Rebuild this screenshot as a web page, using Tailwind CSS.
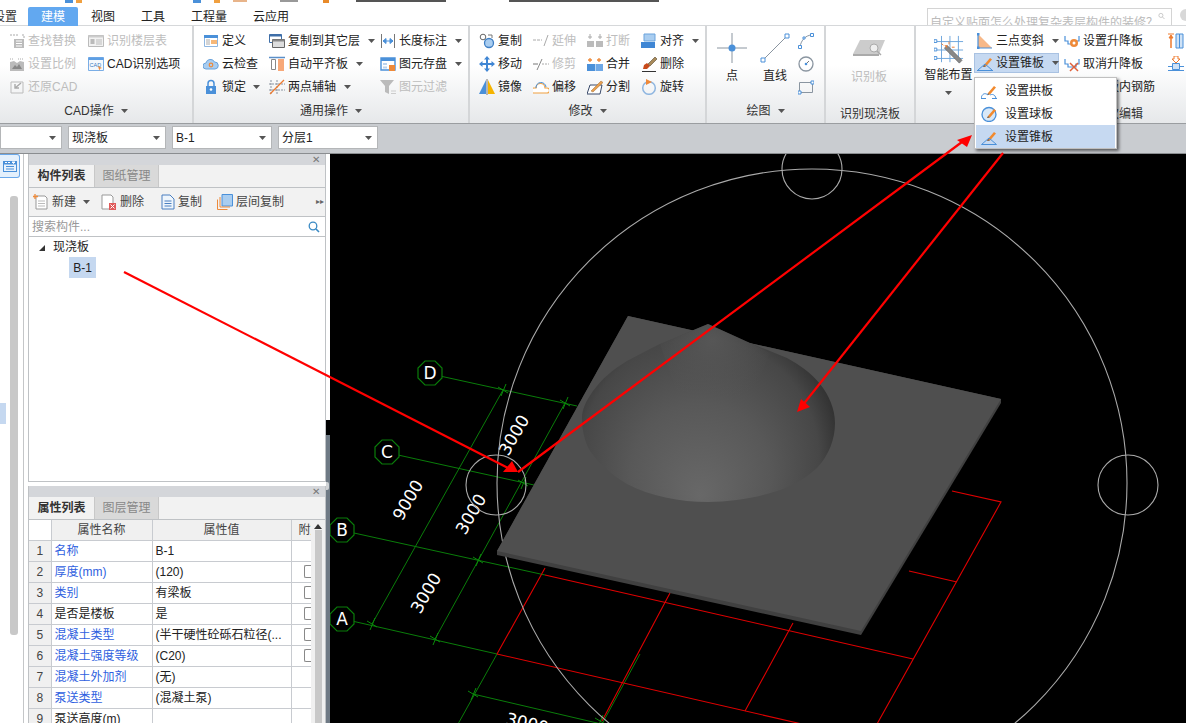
<!DOCTYPE html>
<html lang="zh">
<head>
  <meta charset="UTF-8">
  <title>建模 - 设置锥板</title>
  <script src="https://cdn.jsdelivr.net/npm/@tailwindcss/browser@4"></script>
</head>
<body class="relative w-[1186px] h-[723px] overflow-hidden bg-white text-[12px] leading-none text-[#222] font-['Liberation_Sans','Noto_Sans_CJK_SC',sans-serif]">
  <svg class="hidden">
    <symbol id="caret" viewBox="0 0 7 4"><path d="M0 0h7L3.500 4z" fill="#555"/></symbol>
    <symbol id="pen" viewBox="0 0 16 16"><path d="M7 10L13 3l2 1.500-6 7z" fill="#f28a2e"/><path d="M7 10l-1 2 3-.5z" fill="#7a4a20"/></symbol>
    <g id="bub"><polygon points="-5,-12 5,-12 12,-5 12,5 5,12 -5,12 -12,5 -12,-5" fill="#000" stroke="#0a7d0a" stroke-width="1.200"/></g>
    <path id="tick" d="M-5-3L5 3M-2 6L3-6" stroke="#0a8a0a" fill="none"/>
  </svg>

  <!-- 标题栏和页签 -->
  <div class="relative h-[26px] border-b border-[#d6d8da] bg-white">
    <div class="flex h-[4px] overflow-hidden pl-[65px] gap-[3px]">
      <div class="w-[8px] h-[3px] bg-[#4a90d9]"></div>
      <div class="w-[6px] h-[3px] bg-[#f0a040]"></div>
      <div class="ml-[108px] w-[8px] h-[3px] bg-[#4a90d9]"></div>
      <div class="ml-[10px] w-[6px] h-[3px] bg-[#f0a040]"></div>
      <div class="ml-[10px] w-[14px] h-[2px] bg-[#e8b48a]"></div>
      <div class="ml-[30px] w-[18px] h-[2px] bg-[#999]"></div>
      <div class="ml-[22px] w-[6px] h-[3px] bg-[#e88a2a]"></div>
      <div class="ml-[24px] w-[90px] h-[2px] bg-[#555]"></div>
      <div class="ml-[60px] w-[150px] h-[2px] bg-[#555]"></div>
    </div>
    <div class="flex h-[19px] mt-[3px] items-center">
      <span class="w-[28px] pl-0 text-[#333] -ml-[7px]">设置</span>
      <span class="ml-[7px] flex w-[50px] h-[19px] items-center justify-center rounded-t-[2px] bg-[#62a8f0] text-white">建模</span>
      <span class="ml-[13px]">视图</span>
      <span class="ml-[26px]">工具</span>
      <span class="ml-[26px]">工程量</span>
      <span class="ml-[26px]">云应用</span>
    </div>
    <div class="absolute left-[927px] top-[8px] flex h-[17px] w-[245px] overflow-hidden border border-b-0 border-[#d4d4d4] pl-[2px] pr-[6px]">
      <span class="flex-1 pt-[8px] text-[#bbb] whitespace-nowrap">自定义贴面怎么处理复杂表层构件的装修？</span>
      <svg class="w-[12px] h-[12px] mt-[1px]" viewBox="0 0 12 12"><circle cx="5" cy="5" r="3.500" fill="none" stroke="#bbb" stroke-width="1.300"/><path d="M8 8l3 3" stroke="#bbb" stroke-width="1.500"/></svg>
    </div>
    <div class="absolute left-[1180px] top-[9px] h-[12px] w-[12px] rounded-full bg-[#d8d8d8]"></div>
  </div>

  <!-- 功能区 -->
  <div class="flex h-[98px] bg-gradient-to-b from-white from-40% to-[#e6e8ea] border-b border-[#9a9da0]">

    <!-- CAD操作 -->
    <div class="flex w-[194px] flex-col border-r-2 border-[#d4d6d8] pt-[3px]">
      <div class="flex h-[70px] pl-[9px]">
        <div class="w-[79px] text-[#bdbdbd]">
          <div class="flex h-[23px] items-center gap-[3px]"><svg class="w-[16px] h-[16px]" viewBox="0 0 16 16"><path d="M1 2h9M13 2h2v3" stroke="#aaa" stroke-dasharray="2 1" fill="none"/><path d="M5 6h10v9H5z" fill="#bbb"/><path d="M7 8h6M7 10.500h6M7 13h6" stroke="#fff"/></svg>查找替换</div>
          <div class="flex h-[23px] items-center gap-[3px]"><svg class="w-[16px] h-[16px]" viewBox="0 0 16 16"><path d="M1 3h4M9 3h5" stroke="#aaa" stroke-dasharray="1 1"/><path d="M1 6l4-1 3 2 3-2 4 1v9H1z" fill="#bbb"/><path d="M3 13l3-4 2 2 2-3 3 5z" fill="#888"/></svg>设置比例</div>
          <div class="flex h-[23px] items-center gap-[3px]"><svg class="w-[16px] h-[16px]" viewBox="0 0 16 16"><path d="M2 3h12v11H2z" fill="none" stroke="#bbb"/><path d="M12 4L6 9m0-4v4h4" fill="none" stroke="#aaa" stroke-width="1.400"/></svg>还原CAD</div>
        </div>
        <div>
          <div class="flex h-[23px] items-center gap-[3px] text-[#bdbdbd]"><svg class="w-[16px] h-[16px]" viewBox="0 0 16 16"><path d="M0.500 2.500h15v11h-15z" fill="#f2f2f2" stroke="#bbb"/><path d="M0.500 2.500h15v2h-15z" fill="#ccc"/><path d="M2.500 6h4v5h-4z" fill="#bbb"/><path d="M8 7h6M8 9h6M8 11h6" stroke="#bbb"/></svg>识别楼层表</div>
          <div class="flex h-[23px] items-center gap-[3px]"><svg class="w-[16px] h-[16px]" viewBox="0 0 16 16"><path d="M0.500 1.500h15v13h-15z" fill="#f4f8fd" stroke="#7aaee6"/><path d="M0.500 1.500h15v2.500h-15z" fill="#5e9fe4"/><text x="1.500" y="11" font-size="5.500" fill="#3a78c0">CAD</text><path d="M10 10l4 2-2 .7-.7 2z" fill="#ee8a3a"/></svg>CAD识别选项</div>
        </div>
      </div>
      <div class="flex flex-1 items-center justify-center gap-[7px] text-[#333] pb-[1px]">CAD操作<svg class="w-[7px] h-[4px]"><use href="#caret"/></svg></div>
    </div>

    <!-- 通用操作 -->
    <div class="flex w-[276px] flex-col border-r-2 border-[#d4d6d8] pt-[3px]">
      <div class="flex h-[70px] pl-[9px]">
        <div class="w-[66px]">
          <div class="flex h-[23px] items-center gap-[3px]"><svg class="w-[16px] h-[16px]" viewBox="0 0 16 16"><path d="M1.500 2.500h13v11h-13z" fill="#fff" stroke="#8fb6e0"/><path d="M1 2h14v3H1z" fill="#4a90d9"/><path d="M8 7h6v4H8z" fill="#f7b878"/><path d="M3 7h4M3 9h4M3 11h4" stroke="#aaa"/></svg>定义</div>
          <div class="flex h-[23px] items-center gap-[3px]"><svg class="w-[16px] h-[16px]" viewBox="0 0 16 16"><path d="M3 13a3 3 0 010-6 4.500 4.500 0 018.500-1A3.500 3.500 0 0112 13z" fill="#a9cdf0" stroke="#6aa3dc"/><circle cx="8" cy="9" r="1.800" fill="none" stroke="#ee8a3a" stroke-width="1.200"/></svg>云检查</div>
          <div class="flex h-[23px] items-center gap-[3px]"><svg class="w-[16px] h-[16px]" viewBox="0 0 16 16"><path d="M5 7V4.500a3 3 0 016 0V7" fill="none" stroke="#4a90d9" stroke-width="1.500"/><path d="M3 7h10v8H3z" fill="#4a90d9"/><circle cx="8" cy="10.500" r="1.300" fill="#fff"/></svg>锁定<svg class="ml-[4px] w-[7px] h-[4px]"><use href="#caret"/></svg></div>
        </div>
        <div class="w-[111px]">
          <div class="flex h-[23px] items-center gap-[3px]"><svg class="w-[16px] h-[16px]" viewBox="0 0 16 16"><path d="M0.500 1.500h12v8h-12z" fill="#fff" stroke="#3f6fa8"/><path d="M0.500 1.500h12v2h-12z" fill="#3f6fa8"/><path d="M3.500 6.500h12v8h-12z" fill="#ddd" stroke="#666"/><path d="M3.500 6.500h12v2h-12z" fill="#888"/></svg>复制到其它层<svg class="ml-[5px] w-[7px] h-[4px]"><use href="#caret"/></svg></div>
          <div class="flex h-[23px] items-center gap-[3px]"><svg class="w-[16px] h-[16px]" viewBox="0 0 16 16"><path d="M0 1.500h16" stroke="#5b8fc8" stroke-width="1.500"/><path d="M2.500 3.500h4v10h-4z" fill="#fff" stroke="#888"/><path d="M9 3h6v12H9z" fill="#f7a878"/></svg>自动平齐板<svg class="ml-[5px] w-[7px] h-[4px]"><use href="#caret"/></svg></div>
          <div class="flex h-[23px] items-center gap-[3px]"><svg class="w-[16px] h-[16px]" viewBox="0 0 16 16"><path d="M2 1v14M8 1v14M0 5h16M0 11h16" stroke="#8a93a0" stroke-dasharray="2 1"/><path d="M1 15L15 1" stroke="#ee7a2e" stroke-width="1.200"/></svg>两点辅轴<svg class="ml-[5px] w-[7px] h-[4px]"><use href="#caret"/></svg></div>
        </div>
        <div class="w-[88px]">
          <div class="flex h-[23px] items-center gap-[3px]"><svg class="w-[16px] h-[16px]" viewBox="0 0 16 16"><path d="M1.500 1v14M14.500 1v14" stroke="#777"/><path d="M3 8h10M3 8l3-2.500v5zM13 8l-3-2.500v5z" stroke="#4a90d9" fill="#4a90d9"/></svg>长度标注<svg class="ml-[5px] w-[7px] h-[4px]"><use href="#caret"/></svg></div>
          <div class="flex h-[23px] items-center gap-[3px]"><svg class="w-[16px] h-[16px]" viewBox="0 0 16 16"><path d="M1 2h14v12H1z" fill="#fff" stroke="#4a90d9" stroke-width="1.400"/><path d="M1 2h14v3H1z" fill="#4a90d9"/><path d="M3 7h4v2H3zM3 10.500h4v2H3z" fill="#bcd4ee"/><path d="M9 9h6v6H9z" fill="#ee8a3a"/></svg>图元存盘<svg class="ml-[5px] w-[7px] h-[4px]"><use href="#caret"/></svg></div>
          <div class="flex h-[23px] items-center gap-[3px] text-[#bdbdbd]"><svg class="w-[16px] h-[16px]" viewBox="0 0 16 16"><path d="M0 1h14L9 7v8L5 13V7z" fill="#bbb"/><path d="M11 12h5M11 14.500h5" stroke="#ccc"/></svg>图元过滤</div>
        </div>
      </div>
      <div class="flex flex-1 items-center justify-center gap-[7px] text-[#333] pb-[1px]">通用操作<svg class="w-[7px] h-[4px]"><use href="#caret"/></svg></div>
    </div>

    <!-- 修改 -->
    <div class="flex w-[237px] flex-col border-r-2 border-[#d4d6d8] pt-[3px]">
      <div class="flex h-[70px] pl-[9px]">
        <div class="w-[54px]">
          <div class="flex h-[23px] items-center gap-[3px]"><svg class="w-[16px] h-[16px]" viewBox="0 0 16 16"><circle cx="4" cy="4" r="2.800" fill="#fff" stroke="#666"/><circle cx="10" cy="10" r="4.500" fill="#a9cdf0" stroke="#3f7fc4" stroke-width="1.300"/><path d="M9 2h4M13 2v3" stroke="#777" fill="none"/></svg>复制</div>
          <div class="flex h-[23px] items-center gap-[3px]"><svg class="w-[16px] h-[16px]" viewBox="0 0 16 16"><path d="M8 0l3 3.500H9v3.500h3.500V5L16 8l-3.500 3V9H9v3.500h2L8 16l-3-3.500h2V9H3.500v2L0 8l3.500-3v2H7V3.500H5z" fill="#3f86d4"/></svg>移动</div>
          <div class="flex h-[23px] items-center gap-[3px]"><svg class="w-[16px] h-[16px]" viewBox="0 0 16 16"><path d="M7 1v14H0z" fill="#4a90d9"/><path d="M9 1v14h7z" fill="#f5b400"/><path d="M8 0v16" stroke="#777"/></svg>镜像</div>
        </div>
        <div class="w-[54px] text-[#bdbdbd]">
          <div class="flex h-[23px] items-center gap-[3px]"><svg class="w-[16px] h-[16px]" viewBox="0 0 16 16"><path d="M0 7h9" stroke="#aaa" stroke-dasharray="3 1"/><path d="M11 13l4-11" stroke="#aaa"/></svg>延伸</div>
          <div class="flex h-[23px] items-center gap-[3px]"><svg class="w-[16px] h-[16px]" viewBox="0 0 16 16"><path d="M0 8h5" stroke="#777"/><path d="M4 14L9 3" stroke="#888"/><path d="M9 8h7" stroke="#aaa" stroke-dasharray="2 1"/></svg>修剪</div>
          <div class="flex h-[23px] items-center gap-[3px] text-[#222]"><svg class="w-[16px] h-[16px]" viewBox="0 0 16 16"><path d="M1 14a2.500 2.500 0 010-5h2a4.500 4.500 0 019 0h2a2.500 2.500 0 010 5z" fill="#fff" stroke="#f0a040" stroke-width="1.200"/><path d="M3 9a5 5 0 0110-1" fill="none" stroke="#4a90d9"/></svg>偏移</div>
        </div>
        <div class="w-[54px] text-[#bdbdbd]">
          <div class="flex h-[23px] items-center gap-[3px]"><svg class="w-[16px] h-[16px]" viewBox="0 0 16 16"><path d="M0 8h7v6H0zM9 8h7v6H9z" fill="#bbb"/><path d="M3 1v5M13 1v5M1 4h4M11 4h4" stroke="#aaa"/></svg>打断</div>
          <div class="flex h-[23px] items-center gap-[3px] text-[#222]"><svg class="w-[16px] h-[16px]" viewBox="0 0 16 16"><path d="M0 8h8v7H0z" fill="#4a90d9"/><path d="M8.500 8H16v7H8.500z" fill="#6ea8e6"/><path d="M3 2v4M1 4h4M12 2v4M10 4h4" stroke="#ee8a3a" stroke-width="1.300"/></svg>合并</div>
          <div class="flex h-[23px] items-center gap-[3px] text-[#222]"><svg class="w-[16px] h-[16px]" viewBox="0 0 16 16"><path d="M3 6h12l-2 9H0z" fill="#fff" stroke="#3a4a6a"/><path d="M4 12L14 2l2 1.500L6 13z" fill="#e8a050" stroke="#a06a30" stroke-width=".5"/></svg>分割</div>
        </div>
        <div>
          <div class="flex h-[23px] items-center gap-[3px]"><svg class="w-[16px] h-[16px]" viewBox="0 0 16 16"><path d="M3 1h11v7H3z" fill="#a9cdf0" stroke="#6aa3dc"/><path d="M0 9h14v6H0z" fill="#3f86d4"/></svg>对齐<svg class="ml-[5px] w-[7px] h-[4px]"><use href="#caret"/></svg></div>
          <div class="flex h-[23px] items-center gap-[3px]"><svg class="w-[16px] h-[16px]" viewBox="0 0 16 16"><path d="M7 8l7-7 2 2-7 7z" fill="#a88a5a" stroke="#5a4a30" stroke-width=".6"/><path d="M3 9l3-2 3 3-3 3-4 0z" fill="#c84a1a"/><path d="M1 15.500h14" stroke="#333"/></svg>删除</div>
          <div class="flex h-[23px] items-center gap-[3px]"><svg class="w-[16px] h-[16px]" viewBox="0 0 16 16"><circle cx="8" cy="9" r="6.300" fill="none" stroke="#8fb6e0" stroke-width="1.500"/><path d="M5 0l6 3-6 3z" fill="#ee8a3a"/></svg>旋转</div>
        </div>
      </div>
      <div class="flex flex-1 items-center justify-center gap-[7px] text-[#333] pb-[1px]">修改<svg class="w-[7px] h-[4px]"><use href="#caret"/></svg></div>
    </div>

    <!-- 绘图 -->
    <div class="flex w-[119px] flex-col border-r-2 border-[#d4d6d8] pt-[7px]">
      <div class="flex h-[66px] pl-[10px]">
        <div class="flex w-[30px] flex-col items-center gap-[7px]">
          <svg class="w-[30px] h-[30px]" viewBox="0 0 30 30"><path d="M15 0v30M0 15h30" stroke="#8a95a0"/><circle cx="15" cy="15" r="3.500" fill="#4a90d9"/></svg>
          <span>点</span>
        </div>
        <div class="ml-[14px] flex w-[28px] flex-col items-center gap-[7px]">
          <svg class="w-[30px] h-[30px]" viewBox="0 0 30 30"><path d="M3 27L27 3" stroke="#8a95a0"/><path d="M1 25h4v4H1zM25 1h4v4h-4z" fill="#fff" stroke="#4a90d9"/></svg>
          <span>直线</span>
        </div>
        <div class="ml-[9px] flex flex-col gap-[7px]">
          <svg class="w-[16px] h-[16px]" viewBox="0 0 16 16"><path d="M2 14C3 7 8 2 14 2" fill="none" stroke="#8a95a0"/><path d="M0.500 12.500h3v3h-3zM12.500 0.500h3v3h-3zM5 4h2v2H5z" fill="#fff" stroke="#4a90d9"/></svg>
          <svg class="w-[16px] h-[16px]" viewBox="0 0 16 16"><circle cx="8" cy="8" r="7" fill="none" stroke="#8a95a0" stroke-width="1.300"/><path d="M8 8l3-3" stroke="#777"/><circle cx="8" cy="8" r="1.300" fill="#4a90d9"/></svg>
          <svg class="w-[16px] h-[16px]" viewBox="0 0 16 16"><path d="M1.500 3.500h13v10h-13z" fill="none" stroke="#8a95a0"/><path d="M0 12h3v3H0zM13 2h3v3h-3z" fill="#fff" stroke="#4a90d9"/></svg>
        </div>
      </div>
      <div class="flex flex-1 items-center justify-center gap-[7px] text-[#333] pb-[1px]">绘图<svg class="w-[7px] h-[4px]"><use href="#caret"/></svg></div>
    </div>

    <!-- 识别现浇板 -->
    <div class="flex w-[90px] flex-col border-r-2 border-[#d4d6d8] pt-[14px]">
      <div class="flex h-[59px] flex-col items-center gap-[14px] pr-[2px] text-[#bdbdbd]">
        <svg class="w-[32px] h-[17px]" viewBox="0 0 32 17"><path d="M7 0h25l-6 14H0z" fill="#ccc"/><path d="M0 14h26v2H0z" fill="#aaa"/><circle cx="21" cy="8" r="4" fill="#eee" stroke="#aaa"/><path d="M24 11l4 4" stroke="#aaa" stroke-width="1.500"/></svg>
        <span>识别板</span>
      </div>
      <div class="flex flex-1 items-center justify-center text-[#333] pt-[5px]">识别现浇板</div>
    </div>

    <!-- 板二次编辑 -->
    <div class="flex flex-1 flex-col overflow-hidden pt-[3px]">
      <div class="flex h-[70px]">
        <div class="ml-[7px] flex w-[51px] flex-col items-center pt-[6px]">
          <svg class="w-[30px] h-[30px]" viewBox="0 0 32 32"><path d="M8 1v28M17 1v28M26 1v28M1 7h30M1 16h30M1 25h30" stroke="#6aa3dc"/><path d="M0 5h3v3H0zM0 14h3v3H0zM0 23h3v3H0z" fill="#fff" stroke="#4a90d9"/><path d="M14 11l16 16-3 3-16-16z" fill="#888" stroke="#555" stroke-width=".5"/><path d="M11 11l3 0 0 3z" fill="#ee7a2e"/><path d="M8 9l2 2M16 7v3M19 13h3" stroke="#ee7a2e"/></svg>
          <span class="mt-[4px] whitespace-nowrap">智能布置</span>
          <svg class="mt-[10px] w-[7px] h-[4px]"><use href="#caret"/></svg>
        </div>
        <div class="w-[85px]">
          <div class="flex h-[23px] items-center gap-[3px] pl-[3px] whitespace-nowrap"><svg class="w-[16px] h-[16px] shrink-0" viewBox="0 0 16 16"><path d="M1 1v14h14z" fill="#f7b888"/><path d="M1 1v14h14" fill="none" stroke="#4a90d9" stroke-width="1.200"/><path d="M0 0h2.500v2.500H0zM0 13.500h2.500V16H0z" fill="#4a90d9"/></svg>三点变斜<svg class="ml-[5px] w-[7px] h-[4px] shrink-0"><use href="#caret"/></svg></div>
          <div class="flex h-[20px] w-[85px] mt-[1px] items-center gap-[3px] border border-[#a9c2e2] bg-[#c6d9f1] pl-[2px] whitespace-nowrap"><svg class="w-[16px] h-[16px] shrink-0" viewBox="0 0 16 16"><use href="#pen"/><path d="M0 15.500h16M1 15L8 9l7 6" fill="none" stroke="#4a90d9"/></svg>设置锥板<svg class="ml-[5px] w-[7px] h-[4px] shrink-0"><use href="#caret"/></svg></div>
        </div>
        <div class="ml-[5px] w-[104px]">
          <div class="flex h-[23px] items-center gap-[3px]"><svg class="w-[16px] h-[16px]" viewBox="0 0 16 16"><path d="M1 3v5h3v3h8V8h3V3" fill="none" stroke="#4a90d9" stroke-width="1.200"/><circle cx="10" cy="10" r="4" fill="#ee8a3a"/><circle cx="10" cy="10" r="1.500" fill="#fff"/></svg>设置升降板</div>
          <div class="flex h-[23px] items-center gap-[3px]"><svg class="w-[16px] h-[16px]" viewBox="0 0 16 16"><path d="M1 3v5h3v3h8V8h3V3" fill="none" stroke="#4a90d9" stroke-width="1.200"/><path d="M6 7l8 8M14 7l-8 8" stroke="#e0603a" stroke-width="1.500"/></svg>取消升降板</div>
          <div class="flex h-[23px] items-center gap-[3px]"><svg class="w-[16px] h-[16px]" viewBox="0 0 16 16"><path d="M2 2h12v12H2z" fill="none" stroke="#4a90d9"/></svg>查看板内钢筋</div>
        </div>
        <div>
          <div class="flex h-[23px] items-center"><svg class="w-[16px] h-[16px]" viewBox="0 0 16 16"><path d="M3 4v11" stroke="#ee7a2e" stroke-width="1.500"/><path d="M1 5l2-3 2 3zM0 1h6" fill="#ee7a2e" stroke="#ee7a2e"/><path d="M8 1h3.500v14H8zM11.500 1H15v14h-3.500z" fill="#cfe2f6" stroke="#4a90d9"/></svg></div>
          <div class="flex h-[23px] items-center"><svg class="w-[16px] h-[16px]" viewBox="0 0 16 16"><path d="M6 0h4v3h2L8 7 4 3h2z" fill="#fff" stroke="#ee7a2e"/><path d="M4.500 7.500h7v6h-7z" fill="#cfe2f6" stroke="#4a90d9"/><path d="M0 10.500h4M12 10.500h4M0 14.500h16" stroke="#4a90d9"/></svg></div>
        </div>
      </div>
      <div class="flex flex-1 items-center pl-[167px] pt-[5px] text-[#333] whitespace-nowrap">板二次编辑</div>
    </div>
  </div>

  <!-- 属性选择条 -->
  <div class="flex h-[29px] items-center gap-[6px] bg-[#c9ccd0] pb-[2px]">
    <div class="flex h-[23px] w-[62px] items-center justify-end border border-[#b4b6b8] bg-white pr-[5px]"><svg class="w-[7px] h-[4px]"><use href="#caret"/></svg></div>
    <div class="flex h-[23px] w-[98px] items-center justify-between border border-[#b4b6b8] bg-white pl-[3px] pr-[5px]">现浇板<svg class="w-[7px] h-[4px]"><use href="#caret"/></svg></div>
    <div class="flex h-[23px] w-[100px] items-center justify-between border border-[#b4b6b8] bg-white pl-[3px] pr-[5px]">B-1<svg class="w-[7px] h-[4px]"><use href="#caret"/></svg></div>
    <div class="flex h-[23px] w-[100px] items-center justify-between border border-[#b4b6b8] bg-white pl-[3px] pr-[5px]">分层1<svg class="w-[7px] h-[4px]"><use href="#caret"/></svg></div>
  </div>

  <!-- 主区域 -->
  <div class="flex h-[570px] border-t border-[#8a8d90]">

    <!-- 左侧导航条 -->
    <div class="relative flex w-[24px] flex-col border-r border-[#c4c6c8] bg-white">
      <div class="flex h-[24px] w-[20px] items-center justify-center rounded-r-[3px] border border-l-0 border-[#6aa8ea] bg-[#e4f0fc]">
        <svg class="w-[14px] h-[11px]" viewBox="0 0 14 11"><path d="M0 0h14v11H0z" fill="#4a90d9"/><path d="M1 3.500h12V10H1z" fill="#e8f2fc"/><path d="M2 1.500h2M5 1.500h2M9 1h3L10.500 2.500z" fill="#fff" stroke="#fff"/><path d="M3 5.500h8M3 8h8" stroke="#4a90d9"/></svg>
      </div>
      <div class="ml-[10px] mt-[18px] h-[439px] w-[8px] rounded-[3px] bg-[#c8c8c8]"></div>
      <div class="absolute left-0 top-[249px] h-[21px] w-[6px] bg-[#c5d8f0]"></div>
    </div>

    <!-- 面板列 -->
    <div class="flex w-[302px] flex-col bg-white pl-[4px]">
      <div class="flex h-[328px] shrink-0 flex-col border border-t-0 border-[#bfc2c5]">
        <div class="flex h-[11px] shrink-0 items-center justify-end bg-[#d4d6da] pr-[5px] text-[10px] text-[#777]">✕</div>
        <div class="flex h-[23px] shrink-0 border-b border-[#bfc2c5] bg-[#f2f2f2]">
          <div class="flex w-[65px] items-center justify-center font-bold text-[#333]">构件列表</div>
          <div class="flex w-[65px] items-center justify-center border-x border-[#c8c8c8] bg-[#d9d9d9] text-[#888]">图纸管理</div>
        </div>
        <div class="flex h-[29px] shrink-0 items-center border-b border-[#bfc2c5] bg-[#f2f2f2] pl-[4px] text-[#444]">
          <svg class="w-[16px] h-[16px]" viewBox="0 0 16 16"><path d="M3 2h9l2 2v11H3z" fill="#fff" stroke="#999"/><path d="M5 7h7M5 9.500h7M5 12h7" stroke="#bbb"/><path d="M2 0v5M0 2.500h5" stroke="#ee8a3a" stroke-width="1.300"/></svg>
          <span class="ml-[3px]">新建</span>
          <svg class="ml-[7px] w-[7px] h-[4px]"><use href="#caret"/></svg>
          <svg class="ml-[11px] w-[16px] h-[16px]" viewBox="0 0 16 16"><path d="M1 1h9l2 2v12H1z" fill="#fff" stroke="#999"/><path d="M8 9h7v7H8z" fill="#e05a5a"/><path d="M9.500 10.500l4 4M13.500 10.500l-4 4" stroke="#fff"/></svg>
          <span class="ml-[3px]">删除</span>
          <svg class="ml-[16px] w-[16px] h-[16px]" viewBox="0 0 16 16"><path d="M2 1h8l4 4v10H2z" fill="#eef5fc" stroke="#4a7fc0"/><path d="M4.500 7h7M4.500 9.500h7M4.500 12h7" stroke="#4a7fc0"/></svg>
          <span class="ml-[2px]">复制</span>
          <svg class="ml-[15px] w-[16px] h-[16px]" viewBox="0 0 16 16"><path d="M5 0.500h10.500V12H5z" fill="#a9cdf0" stroke="#4a90d9"/><path d="M3 3v10h10M0.500 5.500v10h10" fill="none" stroke="#ee8a3a"/></svg>
          <span class="ml-[3px]">层间复制</span>
          <span class="ml-auto mr-[1px] text-[8px] text-[#666]">▸▸</span>
        </div>
        <div class="flex h-[20px] shrink-0 items-center justify-between border-b border-[#bfc2c5] pl-[3px] pr-[5px] text-[#999]">
          搜索构件...
          <svg class="w-[12px] h-[12px]" viewBox="0 0 12 12"><circle cx="5" cy="5" r="3.800" fill="none" stroke="#3a8ac4" stroke-width="1.300"/><path d="M8 8l3 3" stroke="#3a8ac4" stroke-width="1.600"/></svg>
        </div>
        <div class="flex-1">
          <div class="flex h-[20px] items-center pl-[10px]">
            <span class="mt-[1px] h-0 w-0 border-b-[6px] border-l-[6px] border-b-[#333] border-l-transparent"></span>
            <span class="ml-[8px]">现浇板</span>
          </div>
          <div class="ml-[40px] flex h-[21px] w-[27px] items-center justify-center bg-[#c5d8f0]">B-1</div>
        </div>
      </div>

      <div class="mt-[4px] flex h-[238px] shrink-0 flex-col overflow-hidden border-x border-[#bfc2c5]">
        <div class="flex h-[11px] shrink-0 items-center justify-end bg-[#d4d6da] pr-[5px] text-[10px] text-[#777]">✕</div>
        <div class="flex h-[23px] shrink-0 border-b border-[#bfc2c5] bg-[#f2f2f2]">
          <div class="flex w-[65px] items-center justify-center font-bold text-[#333]">属性列表</div>
          <div class="flex w-[65px] items-center justify-center border-x border-[#c8c8c8] bg-[#d9d9d9] text-[#888]">图层管理</div>
        </div>
        <div class="flex min-h-0 flex-1">
          <table class="w-[282px] table-fixed border-collapse self-start">
            <colgroup><col class="w-[22px]"><col class="w-[101px]"><col class="w-[139px]"><col class="w-[20px]"></colgroup>
            <thead>
              <tr class="h-[20px] bg-[#f0f0f0] text-[#444]">
                <th class="bg-white font-normal"></th>
                <th class="border-x border-[#c8cbd0] font-normal">属性名称</th>
                <th class="border-x border-[#c8cbd0] font-normal">属性值</th>
                <th class="overflow-hidden pl-[7px] text-left font-normal whitespace-nowrap">附加</th>
              </tr>
            </thead>
            <tbody>
              <tr class="h-[21px] border-y border-[#c8cbd0]"><td class="bg-[#f0f0f0] text-center text-[#444]">1</td><td class="border-x border-[#c8cbd0] pl-[3px] text-[#2f5fe0]">名称</td><td class="border-r border-[#c8cbd0] pl-[3px]">B-1</td><td></td></tr>
              <tr class="h-[21px] border-b border-[#c8cbd0]"><td class="bg-[#f0f0f0] text-center text-[#444]">2</td><td class="border-x border-[#c8cbd0] pl-[3px] text-[#2f5fe0]">厚度(mm)</td><td class="border-r border-[#c8cbd0] pl-[3px]">(120)</td><td class="pl-[12px]"><div class="h-[13px] w-[12px] rounded-l-[2px] border border-r-0 border-[#888]"></div></td></tr>
              <tr class="h-[21px] border-b border-[#c8cbd0]"><td class="bg-[#f0f0f0] text-center text-[#444]">3</td><td class="border-x border-[#c8cbd0] pl-[3px] text-[#2f5fe0]">类别</td><td class="border-r border-[#c8cbd0] pl-[3px]">有梁板</td><td class="pl-[12px]"><div class="h-[13px] w-[12px] rounded-l-[2px] border border-r-0 border-[#888]"></div></td></tr>
              <tr class="h-[21px] border-b border-[#c8cbd0]"><td class="bg-[#f0f0f0] text-center text-[#444]">4</td><td class="border-x border-[#c8cbd0] pl-[3px]">是否是楼板</td><td class="border-r border-[#c8cbd0] pl-[3px]">是</td><td class="pl-[12px]"><div class="h-[13px] w-[12px] rounded-l-[2px] border border-r-0 border-[#888]"></div></td></tr>
              <tr class="h-[21px] border-b border-[#c8cbd0]"><td class="bg-[#f0f0f0] text-center text-[#444]">5</td><td class="border-x border-[#c8cbd0] pl-[3px] text-[#2f5fe0]">混凝土类型</td><td class="border-r border-[#c8cbd0] pl-[3px] whitespace-nowrap overflow-hidden">(半干硬性砼砾石粒径(...</td><td class="pl-[12px]"><div class="h-[13px] w-[12px] rounded-l-[2px] border border-r-0 border-[#888]"></div></td></tr>
              <tr class="h-[21px] border-b border-[#c8cbd0]"><td class="bg-[#f0f0f0] text-center text-[#444]">6</td><td class="border-x border-[#c8cbd0] pl-[3px] text-[#2f5fe0]">混凝土强度等级</td><td class="border-r border-[#c8cbd0] pl-[3px]">(C20)</td><td class="pl-[12px]"><div class="h-[13px] w-[12px] rounded-l-[2px] border border-r-0 border-[#888]"></div></td></tr>
              <tr class="h-[21px] border-b border-[#c8cbd0]"><td class="bg-[#f0f0f0] text-center text-[#444]">7</td><td class="border-x border-[#c8cbd0] pl-[3px] text-[#2f5fe0]">混凝土外加剂</td><td class="border-r border-[#c8cbd0] pl-[3px]">(无)</td><td></td></tr>
              <tr class="h-[21px] border-b border-[#c8cbd0]"><td class="bg-[#f0f0f0] text-center text-[#444]">8</td><td class="border-x border-[#c8cbd0] pl-[3px] text-[#2f5fe0]">泵送类型</td><td class="border-r border-[#c8cbd0] pl-[3px]">(混凝土泵)</td><td></td></tr>
              <tr class="h-[21px] border-b border-[#c8cbd0]"><td class="bg-[#f0f0f0] text-center text-[#444]">9</td><td class="border-x border-[#c8cbd0] pl-[3px]">泵送高度(m)</td><td class="border-r border-[#c8cbd0] pl-[3px]"></td><td></td></tr>
            </tbody>
          </table>
          <div class="flex flex-1 flex-col items-center bg-[#f0f0f0] pt-[4px]">
            <span class="h-0 w-0 border-x-[4px] border-b-[5px] border-x-transparent border-b-[#333]"></span>
            <div class="mt-[1px] w-[7px] flex-1 bg-[#c8c8c8]"></div>
          </div>
        </div>
      </div>
    </div>

    <!-- 分隔条 -->
    <div class="flex w-[4px] flex-col bg-black">
      <div class="h-[266px] bg-white"></div>
      <div class="mt-[15px] flex h-[288px] items-start bg-[#6f7a85] pt-[47px]"><div class="h-[8px] w-[3px] rounded-r-[2px] bg-[#d0d3d6]"></div></div>
    </div>

    <!-- 三维视图 -->
    <svg class="h-[570px] w-[856px] bg-black" viewBox="330 153 856 570" font-family="DejaVu Sans" fill="#fff">
      <defs>
        <radialGradient id="cone" gradientUnits="userSpaceOnUse" cx="700" cy="450" fx="700" fy="495" r="140">
          <stop offset="0" stop-color="#686868"/>
          <stop offset=".5" stop-color="#585858"/>
          <stop offset=".85" stop-color="#474747"/>
          <stop offset="1" stop-color="#323232"/>
        </radialGradient>
        <radialGradient id="apex" gradientUnits="userSpaceOnUse" cx="712" cy="340" r="62">
          <stop offset="0" stop-color="#565656"/>
          <stop offset="1" stop-color="#565656" stop-opacity="0"/>
        </radialGradient>
      </defs>

      <!-- 轴网 -->
      <g stroke="#0a7d0a" fill="none">
        <path d="M440 375L577 405M398 454L534 484M354 532L545 574M330 615L497 653"/>
        <path d="M372 623L503 389M435 638L565 402M497 653L458 723M640 653L602 723"/>
        <path d="M473 693L610 725"/>
      </g>
      <use href="#tick" x="503" y="389"/><use href="#tick" x="565" y="402"/><use href="#tick" x="523" y="482"/>
      <use href="#tick" x="478" y="559"/><use href="#tick" x="372" y="623"/><use href="#tick" x="435" y="638"/>
      <use href="#tick" x="473" y="693"/><use href="#tick" x="600" y="720"/>
      <g stroke="#e00000" fill="none" stroke-width="1.100">
        <path d="M545 574L913 658M497 653L815 726M909 570L957 581M952 490L1001 501L877 723"/>
        <path d="M793 622L745 710M670 592L602 720M545 567L497 653"/>
      </g>

      <!-- 轴号 -->
      <use href="#bub" x="430" y="372"/><use href="#bub" x="387" y="451"/><use href="#bub" x="342" y="529"/><use href="#bub" x="342" y="618"/>
      <g font-size="17" text-anchor="middle">
        <text x="430" y="378">D</text><text x="387" y="457">C</text><text x="342" y="535">B</text><text x="342" y="624">A</text>
        <text transform="translate(519 437) rotate(-60)">3000</text>
        <text transform="translate(413 502) rotate(-60)">9000</text>
        <text transform="translate(476 516) rotate(-60)">3000</text>
        <text transform="translate(431 595) rotate(-60)">3000</text>
        <text transform="translate(526 728) rotate(13)">3000</text>
      </g>

      <!-- 圆形辅助线 -->
      <g fill="none" stroke="#aaaaaa" stroke-width="1.100">
        <ellipse cx="812" cy="482" rx="315" ry="314"/>
        <circle cx="812" cy="168" r="30"/>
        <circle cx="1128" cy="484" r="30"/>
        <circle cx="496" cy="484" r="30"/>
      </g>

      <!-- 现浇板和锥板 -->
      <path d="M497 550L628 315L1001 398V402L861 634L497 554z" fill="#404040"/>
      <path d="M497 550L628 315L1001 398L861 630z" fill="#4f4f4f"/>
      <path d="M708 323L660 343C648 349 638 354 627 360C612 369 602 378 593 390C586 400 582 408 582 417C582 430 585 441 590 450C600 464 612 474 627 483C650 495 680 501 708 501C732 501 756 497 777 490C795 484 807 476 817 467C829 454 835 438 835 422C835 408 829 394 820 383C811 372 800 364 787 357L750 342z" fill="url(#cone)"/>
      <path d="M708 323L660 343L680 400L750 400L770 352L750 342z" fill="url(#apex)"/>
    </svg>
  </div>

  <!-- 下拉菜单 -->
  <div class="absolute left-[974px] top-[77px] h-[72px] w-[143px] border border-[#c0c0c0] bg-white p-[1px] shadow-[2px_2px_3px_rgba(0,0,0,0.55)]">
    <div class="flex h-[23px] items-center gap-[8px] pl-[5px]"><svg class="w-[16px] h-[16px]" viewBox="0 0 16 16"><use href="#pen"/><path d="M0 15.500c1-5 4-6 7-3.500M9 12c2-1 5-1 6 3.500M0 15.500h5M11 15.500h5" fill="none" stroke="#4a90d9"/></svg>设置拱板</div>
    <div class="flex h-[23px] items-center gap-[8px] pl-[5px]"><svg class="w-[16px] h-[16px]" viewBox="0 0 16 16"><circle cx="8" cy="8.500" r="7" fill="#d8e8f8" stroke="#4a90d9" stroke-width="1.300"/><use href="#pen"/></svg>设置球板</div>
    <div class="flex h-[23px] items-center gap-[8px] bg-[#c6d9f1] pl-[5px]"><svg class="w-[16px] h-[16px]" viewBox="0 0 16 16"><use href="#pen"/><path d="M0.500 15.500h15L8 9l-7.500 6.500z" fill="none" stroke="#4a90d9"/></svg>设置锥板</div>
  </div>

  <!-- 标注箭头 -->
  <svg class="pointer-events-none absolute left-0 top-0 h-[723px] w-[1186px]" viewBox="0 0 1186 723">
    <g stroke="#ff0000" stroke-width="2.200" fill="none">
      <path d="M124 272L512 470"/>
      <path d="M518 472L966 139"/>
      <path d="M1003 153L802 406"/>
    </g>
    <g fill="#ff0000">
      <path d="M518 472L503 472L512 461z"/>
      <path d="M972 135L957 140L967 147z"/>
      <path d="M797 412L810 407L801 399z"/>
    </g>
  </svg>
</body>
</html>
